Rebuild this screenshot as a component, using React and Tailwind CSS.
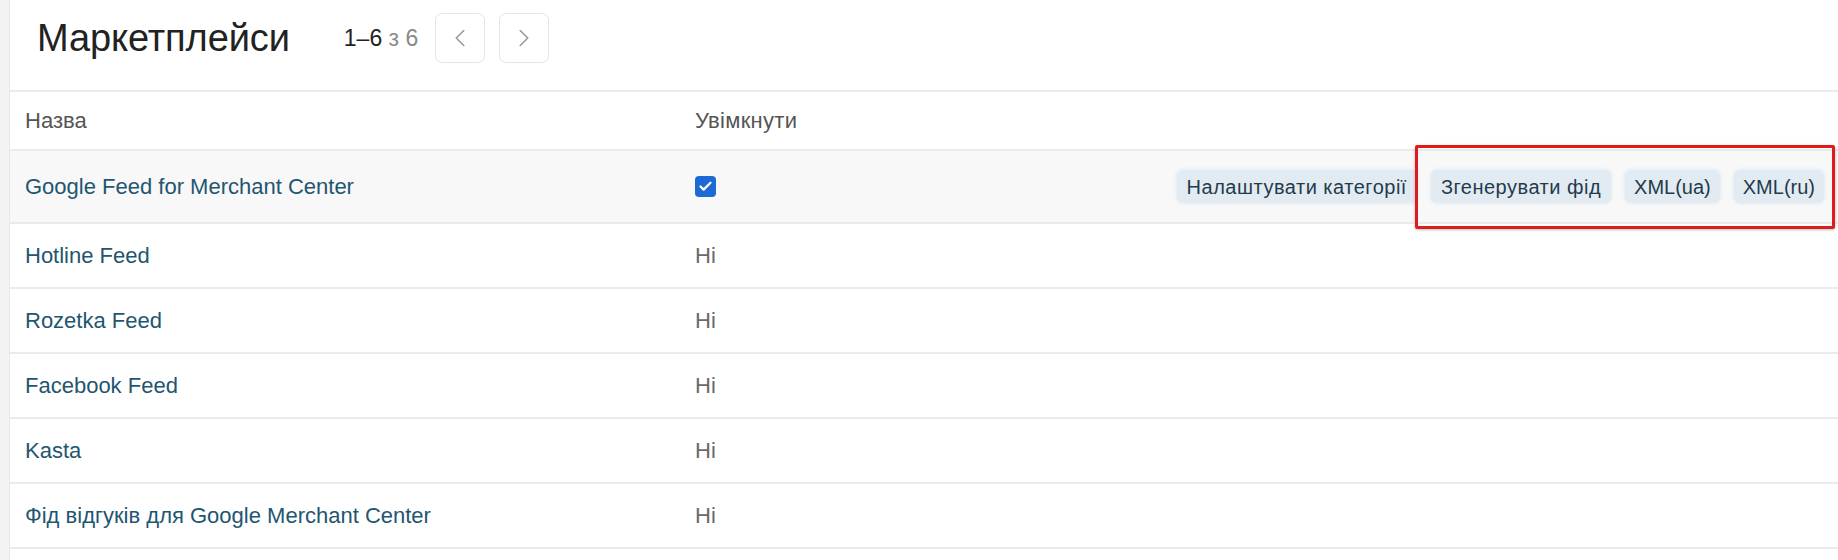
import { ChevronLeft, ChevronRight, Check } from 'lucide-react'

const feeds = [
  { name: 'Google Feed for Merchant Center', enabled: true },
  { name: 'Hotline Feed', enabled: false },
  { name: 'Rozetka Feed', enabled: false },
  { name: 'Facebook Feed', enabled: false },
  { name: 'Kasta', enabled: false },
  { name: 'Фід відгуків для Google Merchant Center', enabled: false },
]

const actions = ['Налаштувати категорії', 'Згенерувати фід', 'XML(ua)', 'XML(ru)']

const PageButton = ({ children }) => (
  <button className="w-[50px] h-[50px] flex items-center justify-center rounded-[7px] border border-[#e4e4e4] bg-white text-[#9a9a9a]">
    {children}
  </button>
)

const App = () => {
  return (
    <div className="relative flex h-[560px] bg-white font-['Liberation_Sans',Arial,sans-serif]">
      <div className="w-[10px] shrink-0 bg-[#f3f3f3] border-r border-[#e9e9e9]" />

      <div className="flex-1 flex flex-col">
        {/* Title + pager */}
        <header className="h-[92px] shrink-0 flex items-start pt-[13px] pl-[27px] border-b-2 border-[#ebebeb]">
          <div className="h-[50px] flex items-center">
            <h1 className="text-[38px] leading-none text-[#222] tracking-[-0.1px]">Маркетплейси</h1>
            <div className="ml-[54px] text-[23px] leading-none">
              <span className="text-[#222]">1–6</span>
              <span className="text-[#8a8a8a]"> з 6</span>
            </div>
            <div className="ml-[17px] flex gap-[14px]">
              <PageButton>
                <ChevronLeft size={30} strokeWidth={1.3} />
              </PageButton>
              <PageButton>
                <ChevronRight size={30} strokeWidth={1.3} />
              </PageButton>
            </div>
          </div>
        </header>

        {/* Table head */}
        <div className="h-[59px] shrink-0 flex items-center border-b-2 border-[#ebebeb] text-[22px] text-[#555]">
          <div className="w-[685px] pl-[15px]">Назва</div>
          <div className="tracking-[0.3px]">Увімкнути</div>
        </div>

        {feeds.map((feed) => (
          <div
            key={feed.name}
            className={
              feed.enabled
                ? 'h-[73px] shrink-0 flex items-center border-b-2 border-[#ebebeb] bg-[#f8f8f8] text-[22px]'
                : 'h-[65px] shrink-0 flex items-center border-b-2 border-[#ebebeb] text-[22px]'
            }
          >
            <div className="w-[685px] pl-[15px] text-[#1f5670]">{feed.name}</div>
            <div className="flex-1 flex items-center">
              {feed.enabled ? (
                <span className="w-[21px] h-[21px] rounded-[4px] bg-[#1d6ad4] flex items-center justify-center">
                  <Check size={15} strokeWidth={3.5} className="text-white" />
                </span>
              ) : (
                <span className="text-[#6a6a6a]">Ні</span>
              )}
            </div>
            {feed.enabled && (
              <div className="flex gap-[14px] pr-[14px]">
                {actions.map((a) => (
                  <button
                    key={a}
                    className={
                      a.startsWith('XML')
                        ? 'h-[33px] px-[9px] rounded-[6px] bg-[#e3ebf2] text-[20px] text-[#1f3b4d] leading-none shadow-[0_0_4px_rgba(200,215,230,0.6)]'
                        : 'h-[33px] px-[10px] rounded-[6px] bg-[#e3ebf2] text-[20px] text-[#1f3b4d] leading-none tracking-[0.5px] shadow-[0_0_4px_rgba(200,215,230,0.6)]'
                    }
                  >
                    {a}
                  </button>
                ))}
              </div>
            )}
          </div>
        ))}
      </div>

      {/* highlight frame */}
      <div className="absolute left-[1415px] top-[145px] w-[420px] h-[84px] border-[3px] border-[#e01b1b] rounded-[2px] shadow-[0_1px_3px_rgba(0,0,0,0.25)]" />
    </div>
  )
}

export default App
